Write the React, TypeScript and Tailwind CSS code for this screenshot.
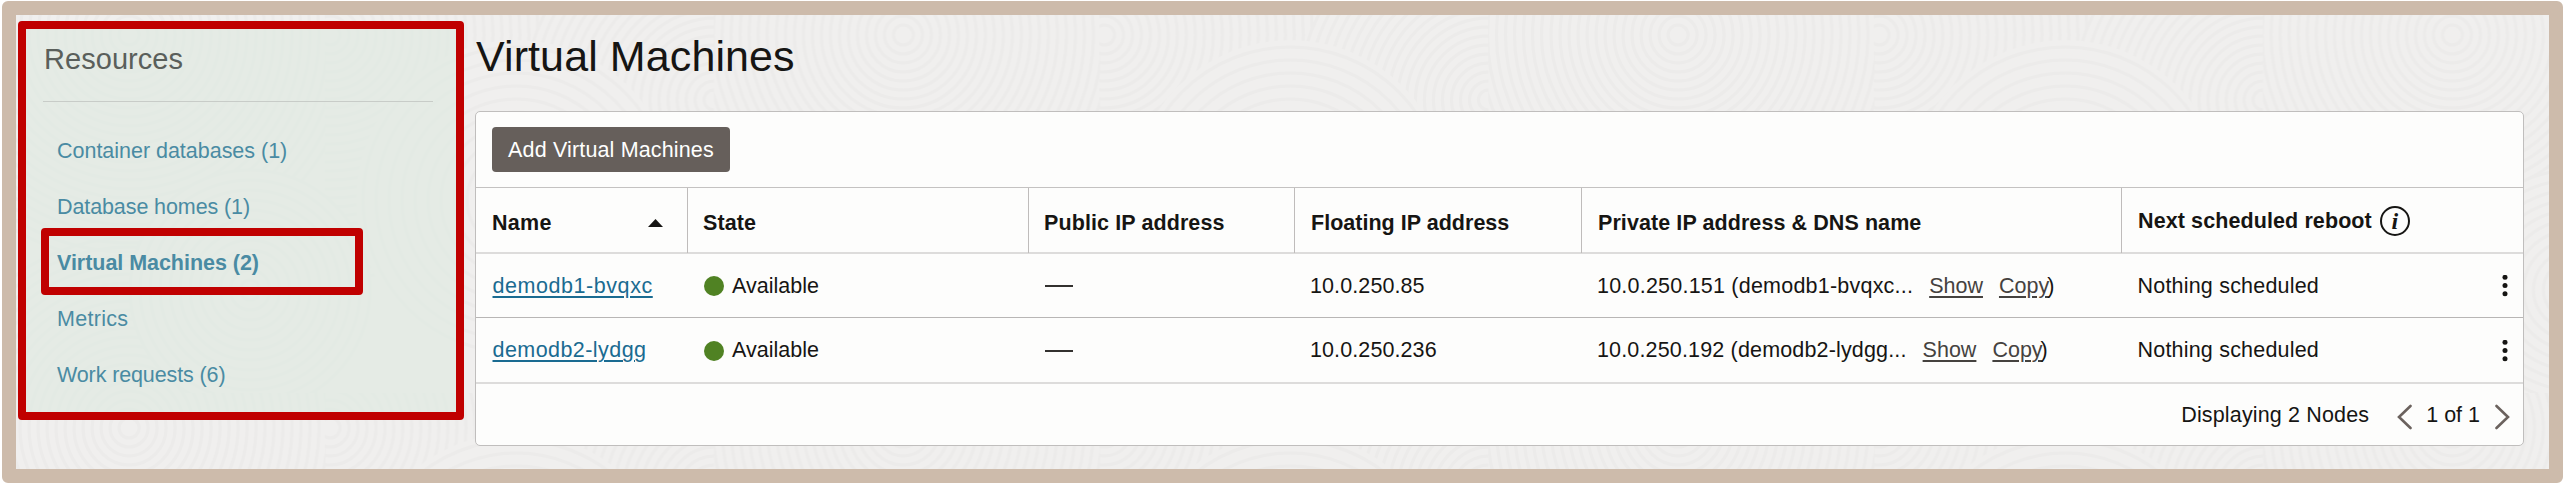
import React from 'react';

const rings = (cx: number, cy: number, from: number, to: number, step: number) => {
  const list: React.ReactElement[] = [];
  for (let r = from; r <= to; r += step) {
    list.push(<circle key={`${cx}-${cy}-${r}`} cx={cx} cy={cy} r={r} />);
  }
  return list;
};

function Texture() {
  return (
    <svg className="absolute inset-0 h-full w-full" aria-hidden="true">
      <defs>
        <pattern id="tile" x="-16" y="-15" width="774.5" height="393" patternUnits="userSpaceOnUse">
          <rect width="775" height="393" fill="#f0efee" />
          <g fill="none" stroke="#ecebea" strokeWidth="3">
            {rings(129, 35, 10, 230, 9)}
            {rings(903, 35, 10, 230, 9)}
            {rings(129, 428, 10, 190, 9)}
            {rings(903, 428, 10, 190, 9)}
            <svg x="325" y="0" width="260" height="393">
              <rect width="260" height="393" fill="#f0efee" stroke="none" />
              {rings(5, 35, 10, 250, 9)}
            </svg>
            <svg x="470" y="0" width="244" height="393">
              <circle cx="244" cy="100" r="190" fill="#f0efee" stroke="none" />
              {rings(244, 100, 10, 190, 9)}
            </svg>
            <circle cx="516" cy="200" r="160" fill="#f0efee" stroke="none" />
            {rings(516, 200, 10, 160, 13)}
            <circle cx="250" cy="290" r="120" fill="#f0efee" stroke="none" />
            {rings(250, 290, 10, 120, 10)}
          </g>
        </pattern>
      </defs>
      <rect width="100%" height="100%" fill="url(#tile)" />
    </svg>
  );
}

const resources = [
  { label: 'Container databases (1)', tracking: 'tracking-[-0.02px]' },
  { label: 'Database homes (1)', tracking: 'tracking-[-0.1px]' },
  { label: 'Virtual Machines (2)', tracking: 'tracking-[-0.04px]', active: true },
  { label: 'Metrics', tracking: 'tracking-[0.3px]' },
  { label: 'Work requests (6)', tracking: 'tracking-[-0.12px]' },
];

function Sidebar() {
  return (
    <aside className="relative mt-[6px] ml-[2px] h-[399px] w-[446px] shrink-0 rounded-[4px] border-8 border-[#c00000] bg-[#e0e9e1]/70">
      <h2 className="mr-[23px] ml-[17px] h-[73px] border-b border-[#c8ccc8] pl-px text-[29px] leading-[61px] font-normal tracking-[0.05px] text-[#5a5f5b]">
        Resources
      </h2>
      <nav className="flex flex-col pt-[21px] pl-[31px]">
        {resources.map((r) => (
          <a
            key={r.label}
            className={`relative h-[56px] leading-[56px] text-[#4a8ba3] ${r.tracking} ${r.active ? 'font-bold' : ''}`}
          >
            {r.label}
            {r.active && (
              <span className="absolute top-[-7px] left-[-16px] h-[67px] w-[322px] rounded-[4px] border-8 border-[#c00000]" />
            )}
          </a>
        ))}
      </nav>
    </aside>
  );
}

const columns = 'grid grid-cols-[212px_341px_266px_287px_540px_1fr]';
const headCell = 'border-r border-[#bfbcbb] pt-[5px] pl-[15px] leading-[60px]';

const machines = [
  {
    name: 'demodb1-bvqxc',
    nameTracking: 'tracking-[0.56px]',
    floating: '10.0.250.85',
    address: '10.0.250.151 (demodb1-bvqxc...',
    addressTracking: 'tracking-[0.22px]',
    border: 'h-[64px] border-b border-[#b8b6b5]',
  },
  {
    name: 'demodb2-lydgg',
    nameTracking: 'tracking-[0.44px]',
    floating: '10.0.250.236',
    address: '10.0.250.192 (demodb2-lydgg...',
    addressTracking: 'tracking-[0.16px]',
    border: 'h-[66px] border-b-2 border-[#dddcdb]',
  },
];

function InfoIcon() {
  return (
    <span className="mt-px ml-[8px] flex h-[30px] w-[30px] items-center justify-center rounded-full border-2 border-[#161513] font-['Liberation_Serif',serif] text-[24px] leading-none font-bold italic">
      i
    </span>
  );
}

function Chevron({ d }: { d: string }) {
  return (
    <svg width="15" height="26" viewBox="0 0 15 26" fill="none" stroke="#6b625e" strokeWidth="2.6" strokeLinecap="round">
      <path d={d} />
    </svg>
  );
}

function MachinesTable() {
  return (
    <section className="h-[335px] w-[2049px] rounded-[5px] border border-[#c0bebd] bg-[#fdfdfc]">
      <div className="flex h-[76px] items-center border-b border-[#c4c2c1] pl-[16px]">
        <button className="h-[45px] w-[238px] rounded-[4px] bg-[#665f5b] pt-[2px] tracking-[0.15px] text-white">
          Add Virtual Machines
        </button>
      </div>

      <div className={`${columns} h-[66px] border-b-2 border-[#dddcdb] font-bold tracking-[0.1px]`}>
        <div className={`${headCell} flex items-center justify-between pr-[24px]`}>
          <span className="pl-px tracking-[0.3px]">Name</span>
          <svg width="15" height="8" viewBox="0 0 15 8">
            <path d="M7.5 0 15 8H0Z" fill="#161513" />
          </svg>
        </div>
        <div className={headCell}>State</div>
        <div className={headCell}>Public IP address</div>
        <div className={`${headCell} tracking-[0.02px]`}>
          <span className="pl-px">Floating IP address</span>
        </div>
        <div className={`${headCell} tracking-[0.08px]`}>
          <span className="pl-px">Private IP address &amp; DNS name</span>
        </div>
        <div className="flex items-center pl-[16px]">
          <span className="leading-[62px]">Next scheduled reboot</span>
          <InfoIcon />
        </div>
      </div>

      {machines.map((m) => (
        <div key={m.name} className={`${columns} ${m.border} items-center pt-px`}>
          <div className="pl-[16.5px]">
            <a
              className={`text-[#1a6b91] underline decoration-[1.5px] underline-offset-[3px] ${m.nameTracking}`}
            >
              {m.name}
            </a>
          </div>
          <div className="flex items-center pl-[16px]">
            <span className="h-5 w-5 rounded-full bg-[#508223]" />
            <span className="ml-[8px]">Available</span>
          </div>
          <div className="pl-[16px]">
            <span className="block h-[2px] w-[28px] bg-[#33312f]" />
          </div>
          <div className="pl-[15px] tracking-[0.1px]">{m.floating}</div>
          <div className="flex items-center pl-[15px] whitespace-nowrap">
            <span className={m.addressTracking}>{m.address}</span>
            <a className="ml-[16px] text-[#45423f] underline decoration-[1.5px] underline-offset-[3px]">Show</a>
            <a className="ml-[16px] text-[#45423f] underline decoration-[1.5px] underline-offset-[3px]">Copy</a>
            <span className="-ml-[2px]">)</span>
          </div>
          <div className="flex items-center justify-between pr-[15px] pl-[15.5px]">
            <span className="tracking-[0.2px]">Nothing scheduled</span>
            <svg width="6" height="22" viewBox="0 0 6 22" fill="#161513">
              <circle cx="3" cy="2.3" r="2.5" />
              <circle cx="3" cy="10.5" r="2.5" />
              <circle cx="3" cy="18.7" r="2.5" />
            </svg>
          </div>
        </div>
      ))}

      <div className="flex h-[61px] items-center justify-end pt-px pr-[13px]">
        <span className="mr-[28px] tracking-[0.15px]">Displaying 2 Nodes</span>
        <span className="pt-[3px]">
          <Chevron d="M13.5 2 2 13 13.5 24" />
        </span>
        <span className="mr-[15px] ml-[14px]">1 of 1</span>
        <span className="pt-[3px]">
          <Chevron d="M1.5 2 13 13 1.5 24" />
        </span>
      </div>
    </section>
  );
}

export default function App() {
  return (
    <div className="h-[485px] w-[2566px] overflow-hidden bg-white pt-px pl-[2px] font-['Liberation_Sans',Arial,sans-serif] text-[21.5px] text-[#161513]">
      <div className="relative flex h-[482px] w-[2561px] overflow-hidden rounded-[6px] border-[14px] border-[#cdbbab] bg-[#f0efee]">
        <Texture />
        <Sidebar />
        <main className="relative ml-[11px]">
          <h1 className="h-[96px] pl-px text-[43px] leading-[82px] font-normal tracking-[0.1px]">Virtual Machines</h1>
          <MachinesTable />
        </main>
      </div>
    </div>
  );
}
